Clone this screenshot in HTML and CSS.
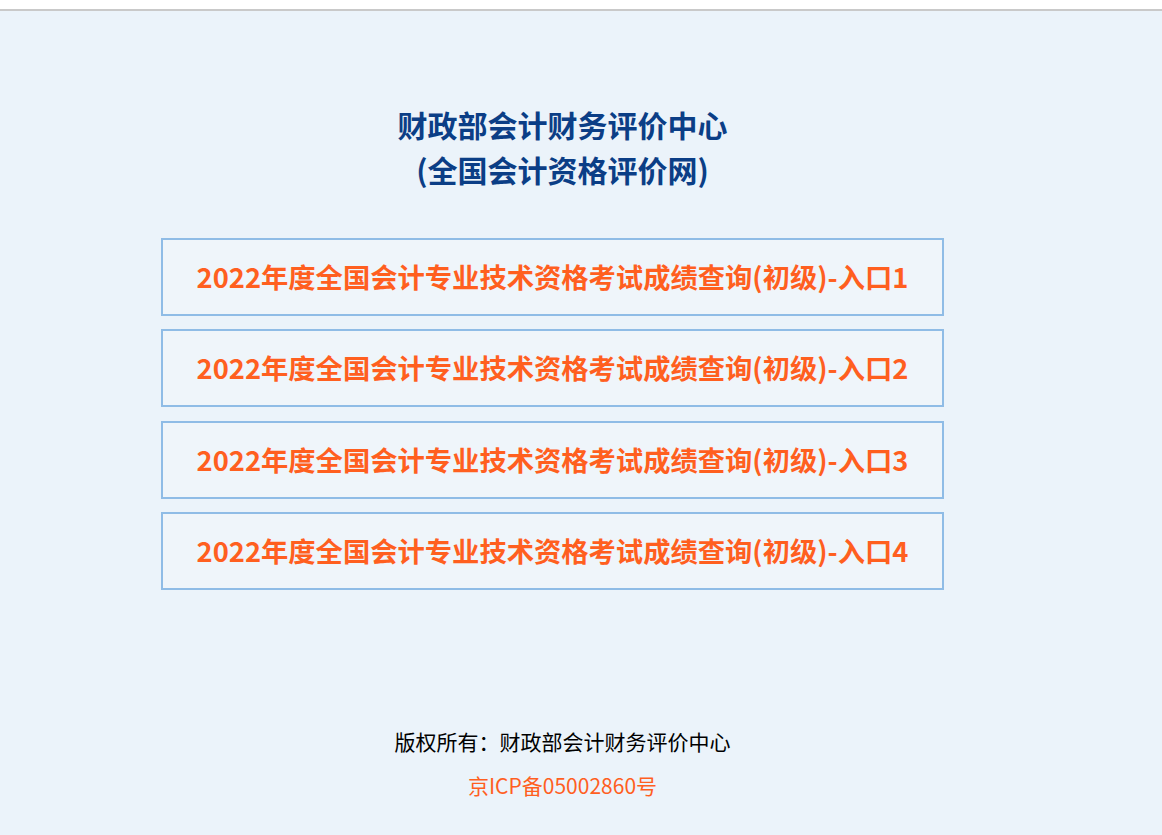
FILE: index.html
```html
<!DOCTYPE html>
<html lang="zh-CN">
<head>
<meta charset="utf-8">
<title>财政部会计财务评价中心</title>
<link rel="stylesheet" href="styles.css">
</head>
<body>
<div class="topbar"></div>
<div class="page">
  <div class="column">
    <h1 class="title">财政部会计财务评价中心<br>(全国会计资格评价网)</h1>
    <ul class="entries">
      <li><a class="entry" href="#">2022年度全国会计专业技术资格考试成绩查询(初级)-入口1</a></li>
      <li><a class="entry" href="#">2022年度全国会计专业技术资格考试成绩查询(初级)-入口2</a></li>
      <li><a class="entry" href="#">2022年度全国会计专业技术资格考试成绩查询(初级)-入口3</a></li>
      <li><a class="entry" href="#">2022年度全国会计专业技术资格考试成绩查询(初级)-入口4</a></li>
    </ul>
    <div class="footer">
      <p class="copy">版权所有：财政部会计财务评价中心</p>
      <p class="icp">京ICP备05002860号</p>
    </div>
  </div>
</div>
</body>
</html>
```

FILE: styles.css
```css
html, body {
  margin: 0;
  padding: 0;
  background: #ebf3fa;
  font-family: "Noto Sans CJK SC", "Microsoft YaHei", sans-serif;
}
.topbar {
  height: 9px;
  background: #ffffff;
  border-bottom: 2px solid #c9c9c9;
}
.page {
  min-height: 824px;
  background: #ebf3fa;
}
.column {
  width: 1125px;
  padding-top: 91px;
  text-align: center;
}
.title {
  margin: 0;
  font-size: 30px;
  line-height: 45px;
  font-weight: 700;
  color: #0b3e86;
}
.entries {
  list-style: none;
  margin: 46px 0 0 161px;
  padding: 0;
  width: 783px;
  display: flex;
  flex-direction: column;
  gap: 13.3px;
}
.entry {
  display: flex;
  align-items: center;
  justify-content: center;
  height: 72px;
  padding-bottom: 2px;
  box-sizing: content-box;
  border: 2px solid #8fbce6;
  background: #eff5fa;
  color: #ff5f1f;
  font-size: 27.3px;
  font-weight: 700;
  text-decoration: none;
}
.footer {
  margin-top: 129px;
}
.footer p {
  margin: 0;
  font-size: 21px;
  line-height: 44px;
}
.copy {
  color: #000000;
}
.icp {
  color: #ff5f1f;
}
```
